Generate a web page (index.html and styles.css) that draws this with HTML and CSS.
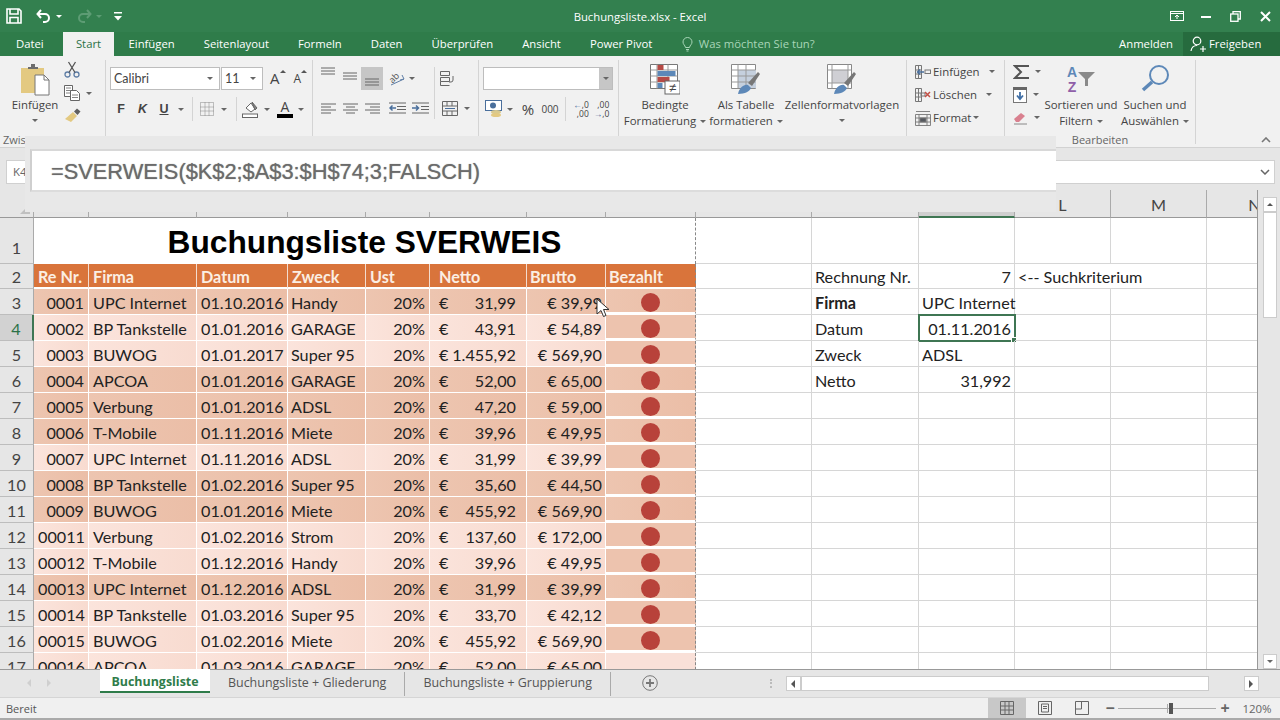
FILE: index.html
```html
<!DOCTYPE html>
<html lang="de">
<head>
    <meta charset="UTF-8">
    <title>Buchungsliste.xlsx - Excel</title>
    <link rel="stylesheet" href="styles.css">
</head>
<body>
<div class="app">
    <div class="titlebar">
        <div class="qat">
            <svg width="16" height="16" viewBox="0 0 16 16" fill="none" stroke="#fff" stroke-width="1.6"><path d="M1 1h12l2 2v12H1z"/><path d="M4 1v5h8V1M4 15V9.500h8V15"/></svg>
            <svg class="undo" width="16" height="14" viewBox="0 0 16 14" fill="none" stroke="#fff" stroke-width="2"><path d="M5 1L1.500 5 5 9M2 5h7a4 4 0 0 1 0 8H7"/></svg>
            <i class="caret white"></i>
            <svg class="redo" width="16" height="14" viewBox="0 0 16 14" fill="none" stroke="#5d9c74" stroke-width="2"><path d="M11 1l3.500 4L11 9M14 5H7a4 4 0 0 0 0 8h2"/></svg>
            <i class="caret dim"></i>
            <svg class="custom" width="8" height="9" viewBox="0 0 8 9" fill="#fff"><rect y="0" width="8" height="1.500"/><path d="M0 4h8L4 8.500z"/></svg>
        </div>
        <div class="doc-title">Buchungsliste.xlsx - Excel</div>
        <div class="win-btns">
            <svg width="14" height="10" viewBox="0 0 14 10" fill="none" stroke="#fff"><rect x=".5" y=".5" width="13" height="9"/><path d="M.5 2.500h13M7 8V4M5 6l2-2 2 2"/></svg>
            <svg width="10" height="10" viewBox="0 0 10 10" fill="#fff"><rect y="5" width="10" height="2"/></svg>
            <svg width="11" height="11" viewBox="0 0 11 11" fill="none" stroke="#fff" stroke-width="1.300"><rect x=".7" y="3" width="7.300" height="7.300"/><path d="M3 3V.7h7.300V8H8"/></svg>
            <svg width="11" height="11" viewBox="0 0 11 11" fill="none" stroke="#fff" stroke-width="2"><path d="M1 1l9 9M10 1l-9 9"/></svg>
        </div>
    </div>

    <div class="tabs">
        <span class="tab">Datei</span>
        <span class="tab active">Start</span>
        <span class="tab">Einfügen</span>
        <span class="tab">Seitenlayout</span>
        <span class="tab">Formeln</span>
        <span class="tab">Daten</span>
        <span class="tab">Überprüfen</span>
        <span class="tab">Ansicht</span>
        <span class="tab">Power Pivot</span>
        <span class="tell">
            <svg width="11" height="15" viewBox="0 0 11 15" fill="none" stroke="#a9d6b8"><path d="M3.500 10.500C3 8 1 7.500 1 5a4.500 4.500 0 0 1 9 0c0 2.500-2 3-2.500 5.500zM4 12.500h3M4.500 14h2"/></svg>
            Was möchten Sie tun?
        </span>
        <span class="login">Anmelden</span>
        <span class="share">
            <svg width="17" height="16" viewBox="0 0 17 16" fill="none" stroke="#fff" stroke-width="1.200"><circle cx="7" cy="5" r="3.800"/><path d="M1 15c.5-3.500 2.500-5.500 6-5.500M10 13h6M13 10v6"/></svg>
            Freigeben
        </span>
    </div>

    <div class="ribbon">
        <div class="group g-clip">
            <div class="group-body clip-body">
                <div class="big-btn paste">
                    <svg width="30" height="32" viewBox="0 0 30 32"><rect x="1" y="4" width="23" height="25" fill="#e3c981"/><path d="M8 5V3h3V0h4v3h3v2z" fill="#6d6d6d"/><path d="M15 11h9l5 5v15H15z" fill="#fff" stroke="#777"/><path d="M24 11v5h5" fill="none" stroke="#777"/></svg>
                    <span>Einfügen</span>
                    <i class="caret"></i>
                </div>
                <div class="clip-tools">
                    <svg width="16" height="17" viewBox="0 0 16 17" fill="none" stroke="#5f7ea6" stroke-width="1.300"><circle cx="3.500" cy="13.500" r="2.500"/><circle cx="12.500" cy="13.500" r="2.500"/><path stroke="#555" d="M5 11.500L11.500 1M11 11.500L4.500 1"/></svg>
                    <div class="tool-row">
                        <svg width="16" height="16" viewBox="0 0 16 16" fill="#fff" stroke="#666"><path d="M.5.500h8v11h-8z"/><path d="M2 3h5M2 5.500h5M2 8h5" stroke-width=".8"/><path d="M6.500 5.500h6l3 3v7h-9z"/><path d="M8 10h6M8 12.500h6" stroke-width=".8"/></svg>
                        <i class="caret"></i>
                    </div>
                    <svg width="17" height="15" viewBox="0 0 17 15"><path d="M1 11L9 4l4 4-6 6z" fill="#e3c981"/><path d="M10 3.500l3-3 3.500 3-3 3.500z" fill="#5f5f5f"/></svg>
                </div>
            </div>
            <div class="group-label label-clip">Zwischenablage</div>
        </div>

        <div class="group g-font">
            <div class="group-body">
                <div class="font-top">
                    <div class="select font-name"><span>Calibri</span><i class="caret"></i></div>
                    <div class="select font-size"><span>11</span><i class="caret"></i></div>
                    <span class="grow-a">A<i class="caret up"></i></span>
                    <span class="shrink-a">A<i class="caret up"></i></span>
                </div>
                <div class="font-tools">
                    <b class="fmt">F</b>
                    <b class="fmt italic">K</b>
                    <b class="fmt under">U</b>
                    <i class="caret"></i>
                    <span class="vsep"></span>
                    <svg width="14" height="14" viewBox="0 0 14 14" fill="none" stroke="#888" stroke-dasharray="1 1"><path d="M.5.500h13v13H.500zM5 .500v13M9 .500v13M.5 5h13M.5 9h13"/></svg>
                    <i class="caret"></i>
                    <span class="vsep"></span>
                    <svg width="18" height="18" viewBox="0 0 18 18" fill="none" stroke="#666"><path d="M4 8l5-5 4 6-4 3z" fill="#fff"/><path d="M10 2l5 6-2 2z" fill="#888"/><rect x=".5" y="14" width="15" height="3.500" fill="#fff"/></svg>
                    <i class="caret"></i>
                    <span class="color-a">A</span>
                    <i class="caret"></i>
                </div>
            </div>
        </div>

        <div class="group g-align">
            <div class="group-body align-body">
                <div class="align-left">
                    <div class="align-top">
                        <svg class="v-top" width="14" height="9" viewBox="0 0 14 9" stroke="#666"><path d="M0 1h14M0 4h14M0 7h14"/></svg>
                        <svg class="v-mid" width="14" height="9" viewBox="0 0 14 9" stroke="#666"><path d="M0 1h14M0 4h14M0 7h14"/></svg>
                        <span class="on"><svg width="14" height="9" viewBox="0 0 14 9" stroke="#666"><path d="M0 1h14M0 4h14M0 7h14"/></svg></span>
                        <span></span>
                        <svg width="18" height="17" viewBox="0 0 18 17" fill="none" stroke="#5f7ea6"><text x="6" y="11" font-size="9" fill="#555" stroke="none" text-anchor="middle" transform="rotate(-45 6 8)" font-family="Open Sans">ab</text><path d="M3 15l13-6M14 5l2 4-4 1"/></svg>
                        <i class="caret"></i>
                    </div>
                    <div class="align-bottom">
                        <svg width="15" height="11" viewBox="0 0 15 11" stroke="#666"><path d="M0 1h15M0 4h10M0 7h15M0 10h10"/></svg>
                        <svg width="15" height="11" viewBox="0 0 15 11" stroke="#666"><path d="M0 1h15M3 4h9M0 7h15M3 10h9"/></svg>
                        <svg width="15" height="11" viewBox="0 0 15 11" stroke="#666"><path d="M0 1h15M5 4h10M0 7h15M5 10h10"/></svg>
                        <svg width="17" height="12" viewBox="0 0 17 12" stroke="#666" fill="none"><path d="M0 1h17M8 4.500h9M8 7.500h9M0 11h17"/><path stroke="#4a6f9c" stroke-width="1.500" d="M7 6H1M3.500 3.500L1 6l2.500 2.500"/></svg>
                        <svg width="17" height="12" viewBox="0 0 17 12" stroke="#666" fill="none"><path d="M0 1h17M9 4.500h8M9 7.500h8M0 11h17"/><path stroke="#4a6f9c" stroke-width="1.500" d="M0 6h6M4 3.500L6.500 6 4 8.500"/></svg>
                    </div>
                </div>
                <span class="vsep tall"></span>
                <div class="align-right">
                    <svg width="16" height="15" viewBox="0 0 16 15" fill="none" stroke="#666"><path d="M.5.500h9v4h-9zM.5 6.500h9v4h-9zM.5 10.500v4h9M13 5v4a2 2 0 0 1-2 2H9"/></svg>
                    <div class="merge">
                        <svg width="16" height="15" viewBox="0 0 16 15" fill="none" stroke="#666"><path d="M.5.500h15v14H.5zM.5 5h15M.5 10h15M5 .500V5M10 .500V5M5 10v4.500M10 10v4.500"/><path stroke="#4a6f9c" d="M3 7.500h10"/></svg>
                        <i class="caret"></i>
                    </div>
                </div>
            </div>
        </div>

        <div class="group g-num">
            <div class="group-body">
                <div class="select num-format"><span></span><b class="num-btn"><i class="caret"></i></b></div>
                <div class="num-tools">
                    <svg width="18" height="18" viewBox="0 0 18 18"><rect x=".5" y=".5" width="16" height="10" fill="#fff" stroke="#4a6f9c"/><circle cx="8" cy="5.500" r="3" fill="#4a6f9c"/><ellipse cx="11" cy="12" rx="5" ry="2" fill="#d9c98e"/><ellipse cx="11" cy="15" rx="5" ry="2" fill="#e3c981"/></svg>
                    <i class="caret"></i>
                    <span class="pct">%</span>
                    <span class="thou">000</span>
                    <span class="vsep"></span>
                    <span class="dec"><span><em>←</em>,0</span><span>,00</span></span>
                    <span class="dec"><span>,00</span><span><em>→</em>,0</span></span>
                </div>
            </div>
        </div>

        <div class="group g-styles">
            <div class="group-body styles-body">
                <div class="big-btn b-cond">
                    <svg width="30" height="31" viewBox="0 0 30 31"><path d="M.5.500h27v24H.5z" fill="#fff" stroke="#777"/><path d="M7 .500v24M18 .500v24M.5 6h27M.5 12h27M.5 18h27" stroke="#999" fill="none"/><rect x="7.500" y="1" width="6" height="5" fill="#b64a45"/><rect x="7.500" y="7" width="18" height="5" fill="#5d88b8"/><rect x="7.500" y="13" width="12" height="5" fill="#b64a45"/><rect x="7.500" y="19" width="5" height="5" fill="#5d88b8"/><rect x="15" y="17" width="15" height="13" fill="#fff" stroke="#666"/><text x="22.500" y="28" font-size="13" text-anchor="middle" fill="#444" font-family="Liberation Sans">≠</text></svg>
                    <span>Bedingte</span>
                    <span>Formatierung<i class="caret inline"></i></span>
                </div>
                <div class="big-btn b-table">
                    <svg width="30" height="31" viewBox="0 0 30 31"><path d="M.5.500h24v24H.5z" fill="#fff" stroke="#888"/><rect x="7" y="6" width="18" height="18" fill="#c5d0de"/><path d="M7 .500v24M15 .500v24M.5 6h24M.5 12h24M.5 18h24" stroke="#999" fill="none"/><path d="M17 19L27 8l2 2-8 12z" fill="#777"/><path d="M7 30c1-6 6-10 10-9l3 3c-1 3-6 6-13 6z" fill="#5d88b8"/></svg>
                    <span>Als Tabelle</span>
                    <span>formatieren<i class="caret inline"></i></span>
                </div>
                <div class="big-btn b-cell">
                    <svg width="30" height="31" viewBox="0 0 30 31"><path d="M.5.500h24v24H.5z" fill="#fff" stroke="#888"/><rect x="5" y="6" width="16" height="13" fill="#cfcfd4"/><path d="M.5 6h24M5 .500v24M21 .500v24M.5 19h24" stroke="#999" fill="none"/><path d="M17 19L27 8l2 2-8 12z" fill="#777"/><path d="M7 30c1-6 6-10 10-9l3 3c-1 3-6 6-13 6z" fill="#5d88b8"/></svg>
                    <span>Zellenformatvorlagen</span>
                    <i class="caret"></i>
                </div>
            </div>
        </div>

        <div class="group g-cells">
            <div class="group-body cells-body">
                <div class="cell-row">
                    <svg width="16" height="16" viewBox="0 0 16 16" fill="none" stroke="#777"><path d="M.5 1.500h6v13h-6zM.5 6h6M.5 10h6M3.500 1.500v13"/><rect x="10" y="6" width="5.500" height="3.500"/><path stroke="#4a6f9c" stroke-width="1.400" d="M9 8H3M5 5.500L2.500 8 5 10.500"/></svg>
                    <span>Einfügen</span><i class="caret c1"></i>
                </div>
                <div class="cell-row">
                    <svg width="16" height="16" viewBox="0 0 16 16" fill="none" stroke="#777"><path d="M.5 1.500h6v13h-6zM.5 6h6M.5 10h6M3.500 1.500v13"/><path d="M6 6h4v3H6z"/><path stroke="#c24f45" stroke-width="1.500" d="M10 5l5 5M15 5l-5 5"/></svg>
                    <span>Löschen</span><i class="caret c2"></i>
                </div>
                <div class="cell-row">
                    <svg width="16" height="16" viewBox="0 0 16 16" fill="none" stroke="#777"><path d="M.5 4.500h15v11H.5zM.5 8h15M.5 12h15M4 4.500v11M12 4.500v11M1 1.500h14" stroke-width=".9"/><rect x="5" y="8" width="6" height="4" fill="#55595f"/></svg>
                    <span>Format</span><i class="caret c3"></i>
                </div>
            </div>
        </div>

        <div class="group g-edit">
            <div class="group-body edit-body">
                <div class="edit-small">
                    <div class="tool-row">
                        <svg width="16" height="14" viewBox="0 0 16 14" fill="none" stroke="#555" stroke-width="2"><path d="M15 2V1H2l6 6-6 6h13v-1"/></svg>
                        <i class="caret"></i>
                    </div>
                    <div class="tool-row">
                        <svg width="14" height="16" viewBox="0 0 14 16"><rect x=".5" y=".5" width="13" height="15" fill="#fff" stroke="#777"/><rect width="14" height="3" fill="#666"/><path d="M7 5v6M4 8.500L7 12l3-3.500" fill="none" stroke="#3f6ea5" stroke-width="1.800"/></svg>
                        <i class="caret"></i>
                    </div>
                    <div class="tool-row">
                        <svg width="15" height="14" viewBox="0 0 15 14"><path d="M1 8l7-6 4 3-6 6H3z" fill="#d9808f"/><path d="M1 13h13" stroke="#888"/></svg>
                        <i class="caret"></i>
                    </div>
                </div>
                <div class="big-btn b-sort">
                    <svg width="30" height="29" viewBox="0 0 30 29"><text x="6" y="13" font-size="14" font-weight="bold" text-anchor="middle" fill="#5d88b8" font-family="Liberation Sans">A</text><text x="6" y="28" font-size="14" font-weight="bold" text-anchor="middle" fill="#8f5fa8" font-family="Liberation Sans">Z</text><path d="M12 8h17l-7 7v7h-3v-7z" fill="#8a8a8a"/></svg>
                    <span>Sortieren und</span>
                    <span>Filtern<i class="caret inline"></i></span>
                </div>
                <div class="big-btn b-find">
                    <svg width="29" height="29" viewBox="0 0 29 29" fill="none"><circle cx="18" cy="11" r="9" stroke="#5d88b8" stroke-width="2"/><path d="M11 18L2 26" stroke="#5d88b8" stroke-width="3.500"/></svg>
                    <span>Suchen und</span>
                    <span>Auswählen<i class="caret inline"></i></span>
                </div>
            </div>
            <div class="group-label">Bearbeiten</div>
        </div>

        <svg class="collapse" width="10" height="6" viewBox="0 0 10 6" fill="none" stroke="#777" stroke-width="1.600"><path d="M1 5l4-4 4 4"/></svg>
    </div>

    <div class="formula-row">
        <div class="name-box">K4</div>
        <div class="formula-input">
            <svg width="10" height="6" viewBox="0 0 10 6" fill="none" stroke="#666" stroke-width="1.500"><path d="M1 1l4 4 4-4"/></svg>
        </div>
    </div>

    <div class="work">
        <div class="sheet">
            <table class="grid">
                <colgroup>
                    <col class="c-row"><col class="c-a"><col class="c-b"><col class="c-c"><col class="c-d"><col class="c-e"><col class="c-f"><col class="c-g"><col class="c-h"><col class="c-i"><col class="c-j"><col class="c-k"><col class="c-k"><col class="c-k"><col class="c-k">
                </colgroup>
                <tr class="letters">
                    <th class="corner"></th><th>A</th><th>B</th><th>C</th><th>D</th><th>E</th><th>F</th><th>G</th><th>H</th><th>I</th><th>J</th><th class="sel">K</th><th>L</th><th>M</th><th>N</th>
                </tr>
                <tr class="r1">
                    <th>1</th><td colspan="8" class="title">Buchungsliste SVERWEIS</td><td></td><td></td><td></td><td></td><td></td><td></td>
                </tr>
                <tr class="r2">
                    <th>2</th><td>Re Nr.</td><td>Firma</td><td>Datum</td><td>Zweck</td><td>Ust</td><td class="p10">Netto</td><td>Brutto</td><td>Bezahlt</td><td></td><td>Rechnung Nr.</td><td class="right">7</td><td colspan="2">&lt;-- Suchkriterium</td><td></td>
                </tr>
                <tr class="data dark">
                    <th>3</th><td>0001</td><td>UPC Internet</td><td>01.10.2016</td><td>Handy</td><td>20%</td><td><span class="eur">€</span>31,99</td><td>€ 39,99</td><td><span class="dot"></span></td><td></td><td class="bold">Firma</td><td>UPC Internet</td><td></td><td></td><td></td>
                </tr>
                <tr class="data">
                    <th class="sel">4</th><td>0002</td><td>BP Tankstelle</td><td>01.01.2016</td><td>GARAGE</td><td>20%</td><td><span class="eur">€</span>43,91</td><td>€ 54,89</td><td><span class="dot"></span></td><td></td><td>Datum</td><td class="right active-cell">01.11.2016<i class="handle"></i></td><td></td><td></td><td></td>
                </tr>
                <tr class="data">
                    <th>5</th><td>0003</td><td>BUWOG</td><td>01.01.2017</td><td>Super 95</td><td>20%</td><td><span class="eur">€</span>1.455,92</td><td>€ 569,90</td><td><span class="dot"></span></td><td></td><td>Zweck</td><td>ADSL</td><td></td><td></td><td></td>
                </tr>
                <tr class="data dark">
                    <th>6</th><td>0004</td><td>APCOA</td><td>01.01.2016</td><td>GARAGE</td><td>20%</td><td><span class="eur">€</span>52,00</td><td>€ 65,00</td><td><span class="dot"></span></td><td></td><td>Netto</td><td class="right">31,992</td><td></td><td></td><td></td>
                </tr>
                <tr class="data dark">
                    <th>7</th><td>0005</td><td>Verbung</td><td>01.01.2016</td><td>ADSL</td><td>20%</td><td><span class="eur">€</span>47,20</td><td>€ 59,00</td><td><span class="dot"></span></td><td></td><td></td><td></td><td></td><td></td><td></td>
                </tr>
                <tr class="data dark">
                    <th>8</th><td>0006</td><td>T-Mobile</td><td>01.11.2016</td><td>Miete</td><td>20%</td><td><span class="eur">€</span>39,96</td><td>€ 49,95</td><td><span class="dot"></span></td><td></td><td></td><td></td><td></td><td></td><td></td>
                </tr>
                <tr class="data">
                    <th>9</th><td>0007</td><td>UPC Internet</td><td>01.11.2016</td><td>ADSL</td><td>20%</td><td><span class="eur">€</span>31,99</td><td>€ 39,99</td><td><span class="dot"></span></td><td></td><td></td><td></td><td></td><td></td><td></td>
                </tr>
                <tr class="data dark">
                    <th>10</th><td>0008</td><td>BP Tankstelle</td><td>01.02.2016</td><td>Super 95</td><td>20%</td><td><span class="eur">€</span>35,60</td><td>€ 44,50</td><td><span class="dot"></span></td><td></td><td></td><td></td><td></td><td></td><td></td>
                </tr>
                <tr class="data dark">
                    <th>11</th><td>0009</td><td>BUWOG</td><td>01.01.2016</td><td>Miete</td><td>20%</td><td><span class="eur">€</span>455,92</td><td>€ 569,90</td><td><span class="dot"></span></td><td></td><td></td><td></td><td></td><td></td><td></td>
                </tr>
                <tr class="data">
                    <th>12</th><td>00011</td><td>Verbung</td><td>01.02.2016</td><td>Strom</td><td>20%</td><td><span class="eur">€</span>137,60</td><td>€ 172,00</td><td><span class="dot"></span></td><td></td><td></td><td></td><td></td><td></td><td></td>
                </tr>
                <tr class="data">
                    <th>13</th><td>00012</td><td>T-Mobile</td><td>01.12.2016</td><td>Handy</td><td>20%</td><td><span class="eur">€</span>39,96</td><td>€ 49,95</td><td><span class="dot"></span></td><td></td><td></td><td></td><td></td><td></td><td></td>
                </tr>
                <tr class="data dark">
                    <th>14</th><td>00013</td><td>UPC Internet</td><td>01.12.2016</td><td>ADSL</td><td>20%</td><td><span class="eur">€</span>31,99</td><td>€ 39,99</td><td><span class="dot"></span></td><td></td><td></td><td></td><td></td><td></td><td></td>
                </tr>
                <tr class="data">
                    <th>15</th><td>00014</td><td>BP Tankstelle</td><td>01.03.2016</td><td>Super 95</td><td>20%</td><td><span class="eur">€</span>33,70</td><td>€ 42,12</td><td><span class="dot"></span></td><td></td><td></td><td></td><td></td><td></td><td></td>
                </tr>
                <tr class="data">
                    <th>16</th><td>00015</td><td>BUWOG</td><td>01.02.2016</td><td>Miete</td><td>20%</td><td><span class="eur">€</span>455,92</td><td>€ 569,90</td><td><span class="dot"></span></td><td></td><td></td><td></td><td></td><td></td><td></td>
                </tr>
                <tr class="data last">
                    <th>17</th><td>00016</td><td>APCOA</td><td>01.03.2016</td><td>GARAGE</td><td>20%</td><td><span class="eur">€</span>52,00</td><td>€ 65,00</td><td></td><td></td><td></td><td></td><td></td><td></td><td></td>
                </tr>
            </table>
        </div>
        <div class="vscroll">
            <div class="sb-btn"><i class="caret up"></i></div>
            <div class="sb-thumb"></div>
            <div class="sb-track"></div>
            <div class="sb-btn"><i class="caret"></i></div>
        </div>
    </div>

    <div class="sheetbar">
        <div class="sheet-nav"><i class="tri left"></i><i class="tri right"></i></div>
        <div class="sheet-tab on">Buchungsliste</div>
        <div class="sheet-tab">Buchungsliste + Gliederung</div>
        <div class="sheet-tab">Buchungsliste + Gruppierung</div>
        <svg class="add-sheet" width="16" height="16" viewBox="0 0 16 16" fill="none" stroke="#777"><circle cx="8" cy="8" r="7.300"/><path stroke-width="1.800" d="M8 4v8M4 8h8"/></svg>
        <div class="hscroll">
            <span class="grip"></span>
            <div class="hs-btn"><i class="tri left dark"></i></div>
            <div class="hs-thumb"></div>
            <div class="hs-track"></div>
            <div class="hs-btn"><i class="tri right dark"></i></div>
        </div>
    </div>

    <div class="statusbar">
        <span class="ready">Bereit</span>
        <div class="views">
            <span class="view on"><svg width="14" height="14" viewBox="0 0 14 14" fill="none" stroke="#666"><path d="M.5.500h13v13H.5zM5 .500v13M9 .500v13M.5 5h13M.5 9h13"/></svg></span>
            <span class="view"><svg width="14" height="14" viewBox="0 0 14 14" fill="none" stroke="#666"><path d="M.5.500h13v13H.5z"/><path d="M3.500 3h7v8h-7zM5 5.500h4M5 7.500h4"/></svg></span>
            <span class="view last"><svg width="14" height="14" viewBox="0 0 14 14" fill="none" stroke="#666"><path d="M.5.500h13v13H.5zM.5 8h6M6.500.500V8"/></svg></span>
        </div>
        <span class="zoom-sign">−</span>
        <span class="slider"><i class="mid"></i><i class="knob"></i></span>
        <span class="zoom-sign plus">+</span>
        <span class="zoom-pct">120%</span>
    </div>

    <div class="formula-pop">
        <div class="formula-box">=SVERWEIS($K$2;$A$3:$H$74;3;FALSCH)</div>
    </div>

    <svg class="pointer" width="14" height="21" viewBox="0 0 14 21"><path d="M1 1v15l4-3.500 2.500 6 2.500-1-2.500-6H13z" fill="#fff" stroke="#333"/></svg>
</div>
</body>
</html>
```

FILE: styles.css
```css
* {
    box-sizing: border-box;
}
html, body {
    margin: 0;
    padding: 0;
}
body {
    font-family: "Open Sans", sans-serif;
    font-size: 11.400px;
    color: #444;
    background-color: #e6e6e6;
}
svg {
    display: block;
    flex: none;
}
.app {
    position: relative;
    width: 1280px;
    height: 720px;
    overflow: hidden;
}

/* small triangles used all over the ribbon */
.caret {
    display: inline-block;
    width: 0;
    height: 0;
    border-left: 3px solid transparent;
    border-right: 3px solid transparent;
    border-top: 3px solid #666;
}
.caret.up {
    border-top: 0;
    border-bottom: 3px solid #555;
}
.caret.white {
    border-top-color: #fff;
}
.caret.dim {
    border-top-color: #5d9c74;
}
.caret.inline {
    margin-left: 4px;
    vertical-align: 2px;
}

/* title bar */
.titlebar {
    display: grid;
    grid-template-columns: 1fr auto 1fr;
    align-items: center;
    height: 32px;
    background-color: #33804f;
    color: #fff;
}
.qat {
    display: flex;
    align-items: center;
    padding-left: 6px;
}
.undo {
    margin-left: 14px;
}
.qat .caret {
    margin-left: 4px;
}
.redo {
    margin-left: 14px;
}
.custom {
    margin-left: 12px;
}
.doc-title {
    font-size: 11.300px;
}
.win-btns {
    display: flex;
    justify-content: flex-end;
    align-items: center;
    gap: 19px;
    padding-right: 9px;
}
.win-btns svg:first-child {
    margin-right: -2px;
}

/* ribbon tabs */
.tabs {
    display: flex;
    align-items: stretch;
    height: 24px;
    background-color: #2f7c4a;
    color: #fff;
    font-size: 11.300px;
    line-height: 24px;
}
.tab {
    padding: 0 14.500px;
}
.tab:first-child {
    width: 63px;
    padding: 0 0 0 16px;
}
.tab.active {
    width: 51px;
    padding: 0;
    text-align: center;
    background-color: #f1f1f1;
    color: #2c7248;
}
.tell {
    display: flex;
    align-items: center;
    gap: 6px;
    margin-left: 15px;
    color: #a9d6b8;
}
.login {
    margin-left: auto;
}
.share {
    display: flex;
    align-items: center;
    gap: 2px;
    width: 97px;
    margin-left: 10px;
    padding-left: 7px;
    background-color: #266b3e;
}

/* ribbon */
.ribbon {
    display: flex;
    height: 92px;
    padding-top: 4px;
    background-color: #f1f1f1;
    border-bottom: 1px solid #d2d2d2;
}
.group {
    display: flex;
    flex-direction: column;
    height: 84px;
    border-right: 1px solid #d4d4d4;
}
.group-body {
    flex: none;
    height: 72px;
    padding-top: 7px;
}
.group-label {
    flex: none;
    height: 16px;
    line-height: 16px;
    text-align: center;
    color: #666;
    font-size: 11px;
    white-space: nowrap;
}
.label-clip {
    padding-left: 3px;
    overflow: hidden;
    text-align: left;
}
.g-clip { width: 106px; }
.g-font { width: 207px; padding-left: 4px; }
.g-align { width: 166px; padding-left: 4px; }
.g-num { width: 140px; padding-left: 4px; }
.g-styles { width: 288px; }
.g-cells { width: 98px; }
.g-edit { width: 191px; }

.big-btn {
    display: flex;
    flex-direction: column;
    align-items: center;
    line-height: 16px;
    white-space: nowrap;
}
.big-btn svg {
    margin-bottom: 2px;
}
.big-btn > .caret {
    margin-top: 6px;
}
.clip-body, .styles-body, .edit-body {
    display: flex;
    padding-top: 4px;
}
.paste {
    width: 70px;
}
.paste svg {
    margin-bottom: 1px;
}
.clip-tools {
    display: flex;
    flex-direction: column;
    gap: 7px;
    margin: -3px 0 0 -6px;
}
.tool-row {
    display: flex;
    align-items: center;
    gap: 6px;
}

.select {
    display: flex;
    align-items: center;
    justify-content: space-between;
    height: 23px;
    padding: 0 6px 0 3px;
    background-color: #fff;
    border: 1px solid #bdbdbd;
    font-family: "Lato", sans-serif;
    font-size: 12.500px;
}
.font-top {
    display: flex;
    align-items: center;
}
.font-name { width: 110px; }
.font-size { width: 42px; margin-left: 1px; }
.grow-a, .shrink-a {
    display: flex;
    align-items: flex-start;
    margin-left: 7px;
    font-size: 15px;
    line-height: 17px;
}
.shrink-a {
    font-size: 12px;
    margin-left: 8px;
}
.font-tools, .num-tools, .align-top, .align-bottom {
    display: grid;
    justify-items: center;
    align-items: center;
    height: 22px;
}
.font-tools {
    grid-template-columns: 22px 21px 22px 12px 10px 20px 14px 10px 20px 12px 24px 8px;
    margin-top: 7px;
}
.fmt {
    font-family: "Liberation Sans", sans-serif;
    font-size: 12.500px;
}
.fmt.italic {
    font-style: italic;
}
.fmt.under {
    text-decoration: underline;
}
.vsep {
    display: block;
    width: 1px;
    height: 24px;
    background-color: #d4d4d4;
}
.color-a {
    width: 16px;
    height: 18px;
    border-bottom: 4px solid #000;
    font-size: 14px;
    line-height: 14px;
    text-align: center;
}

.align-body {
    display: flex;
}
.align-left {
    width: 117px;
}
.align-top {
    grid-template-columns: 22px 22px 22px 4px 20px 10px;
    height: 23px;
}
.v-top {
    margin-top: -15px;
}
.v-mid {
    margin-top: -5px;
}
.align-top .on {
    display: flex;
    align-items: center;
    justify-content: center;
    width: 22px;
    height: 23px;
    padding-top: 8px;
    background-color: #c6c6c6;
}
.align-bottom {
    grid-template-columns: 22px 22px 22px 28px 18px;
    margin-top: 7px;
}
.vsep.tall {
    height: 52px;
}
.align-right {
    display: flex;
    flex-direction: column;
    gap: 15px;
    padding-left: 5px;
    padding-top: 4px;
}
.merge {
    display: flex;
    align-items: center;
    gap: 6px;
    padding-left: 2px;
}

.num-format {
    width: 130px;
    padding: 0;
}
.num-btn {
    display: flex;
    align-items: center;
    justify-content: center;
    width: 13px;
    height: 100%;
    background-color: #c6c6c6;
}
.num-tools {
    grid-template-columns: 22px 10px 26px 18px 12px 20px 21px;
    margin-top: 7px;
}
.pct {
    font-size: 15px;
}
.thou {
    font-size: 10px;
}
.dec {
    display: flex;
    flex-direction: column;
    align-items: flex-end;
    font-size: 8.500px;
    line-height: 9px;
}
.dec em {
    color: #4a6f9c;
    font-style: normal;
}

.b-cond { width: 92px; }
.b-table { width: 70px; }
.b-cell { width: 122px; }

.cells-body {
    padding-top: 0;
}
.cell-row {
    display: flex;
    align-items: center;
    height: 23px;
    padding-left: 8px;
}
.cell-row span {
    margin-left: 2px;
}
.c1 { margin-left: 9px; }
.c2 { margin-left: 9px; }
.c3 { margin-left: 2px; }

.edit-body {
    padding-top: 0;
}
.edit-small {
    display: flex;
    flex-direction: column;
    width: 40px;
}
.edit-small .tool-row {
    height: 23px;
    padding-left: 8px;
}
.b-sort {
    width: 72px;
    padding-top: 4px;
}
.b-find {
    width: 76px;
    padding-top: 4px;
}
.b-sort svg, .b-find svg {
    margin-bottom: 4px;
}
.collapse {
    margin: 77px 0 0 65px;
}

/* formula bar */
.formula-row {
    display: flex;
    height: 42px;
    padding: 12px 5px 6px 6px;
    background-color: #e6e6e6;
}
.name-box {
    width: 100px;
    padding-left: 6px;
    background-color: #fff;
    border: 1px solid #d0d0d0;
    line-height: 22px;
    color: #666;
}
.formula-input {
    display: flex;
    flex: 1;
    align-items: center;
    justify-content: flex-end;
    padding-right: 4px;
    background-color: #fff;
    border: 1px solid #d0d0d0;
}
.formula-pop {
    position: absolute;
    left: 25px;
    top: 136px;
    width: 1031px;
    height: 76px;
    padding: 13px 0 0 5px;
    background-color: #e8e8e8;
}
.formula-box {
    height: 43px;
    padding-left: 19px;
    background-color: #fff;
    border-left: 2px solid #cfcfcf;
    border-top: 2px solid #d8d8d8;
    border-bottom: 2px solid #dcdcdc;
    font-family: "Liberation Sans", sans-serif;
    font-size: 21.800px;
    line-height: 41px;
    color: #6b6b6b;
    text-shadow: 0 0 1px #8a8a8a;
}

/* sheet */
.work {
    display: flex;
    height: 479px;
}
.sheet {
    width: 1258px;
    height: 479px;
    overflow: hidden;
    background-color: #fff;
    border-right: 1px solid #999;
}
.grid {
    width: 1303px;
    table-layout: fixed;
    border-collapse: separate;
    border-spacing: 0;
    font-family: "Lato", sans-serif;
    font-size: 16.200px;
    color: #222;
}
.c-row { width: 34px; }
.c-a { width: 55px; }
.c-b { width: 108px; }
.c-c { width: 91px; }
.c-d { width: 78px; }
.c-e { width: 64px; }
.c-f { width: 97px; }
.c-g { width: 79px; }
.c-h { width: 90px; }
.c-i { width: 116px; }
.c-j { width: 107px; }
.c-k { width: 96px; }

.grid td {
    height: 26px;
    padding: 1px 4px 0;
    border-right: 1px solid #d6d6d6;
    border-bottom: 1px solid #d6d6d6;
    white-space: nowrap;
    position: relative;
}
.grid td:nth-child(n+10) {
    padding: 1px 3px 0;
}
.grid th {
    padding: 1px 0 0;
    background-color: #e6e6e6;
    border-right: 1px solid #aaa;
    border-bottom: 1px solid #bdbdbd;
    font-weight: normal;
    color: #444;
    text-align: center;
}
.grid .letters th {
    height: 28px;
    padding: 0;
    border-bottom: 1px solid #999;
    vertical-align: bottom;
    line-height: 24px;
}
.letters .corner {
    position: relative;
}
.letters .corner::after {
    content: "";
    position: absolute;
    right: 3px;
    bottom: 3px;
    border-left: 10px solid transparent;
    border-bottom: 10px solid #c0c0c0;
}
.grid th.sel {
    background-color: #d2d2d2;
    color: #2c7248;
    border-right: 2px solid #3f7653;
}
.grid .letters th.sel {
    background: linear-gradient(#e6e6e6 75%, #cfcfcf 75%);
    border-right: 1px solid #aaa;
    border-bottom: 2px solid #3f7653;
}
.r1 td {
    height: 46px;
}
.r1 th {
    padding: 0 0 2px;
    vertical-align: bottom;
    line-height: 26px;
}
.grid .r1 .title {
    padding: 2px 0 0;
    text-align: center;
    font-family: "Liberation Sans", sans-serif;
    font-size: 31.700px;
    font-weight: bold;
    color: #000;
    border-right: 1px dashed #888;
    border-bottom: 0;
}
.r2 td {
    height: 25px;
}
.r2 td:nth-child(-n+9) {
    background-color: #d9743b;
    color: #fbeee3;
    font-weight: bold;
    border-color: #f3dccf;
    border-bottom: 2px solid #fff;
}
.r2 td:nth-child(9) {
    border-right: 1px dashed #888;
}
.r2 td:nth-child(n+8):nth-child(-n+9) {
    padding-left: 3px;
}
.r2 .p10 {
    padding-left: 9px;
}
.right {
    text-align: right;
}
.bold {
    font-weight: bold;
}
.data td:nth-child(-n+9) {
    background-image: linear-gradient(90deg, #fbe4dc, #f8dbd0);
    border-color: #fff;
}
.data.dark td:nth-child(-n+9) {
    background-image: linear-gradient(90deg, #edc5b0, #ebbea7);
}
.data td:nth-child(2),
.data td:nth-child(4),
.data td:nth-child(6),
.data td:nth-child(7),
.data td:nth-child(8) {
    text-align: right;
}
.data td:nth-child(4) {
    padding-right: 5px;
}
.data td:nth-child(5) {
    padding-left: 3px;
}
.data td:nth-child(7) {
    padding: 1px 10px 0 9px;
}
.data td:nth-child(8) {
    padding-right: 3px;
}
.data td:nth-child(9) {
    background-image: none;
    background-color: #edc3ae;
    border-right: 1px dashed #888;
    border-bottom: 3px solid #fff;
    padding: 4px 0 0;
}
.data.last td:nth-child(9) {
    background-color: #f9e0d8;
}
.eur {
    float: left;
}
.dot {
    display: block;
    width: 19px;
    height: 19px;
    margin: 0 auto;
    border-radius: 50%;
    background-color: #b8423a;
}
.active-cell {
    outline: 2px solid #3f7653;
    outline-offset: -1px;
}
.handle {
    position: absolute;
    right: -3px;
    bottom: -3px;
    width: 6px;
    height: 6px;
    background-color: #3f7653;
    border: 1px solid #fff;
}

/* vertical scrollbar */
.vscroll {
    display: flex;
    flex-direction: column;
    align-items: center;
    width: 22px;
    padding: 7px 0 0 2px;
    background-color: #e6e6e6;
}
.sb-btn {
    display: flex;
    align-items: center;
    justify-content: center;
    width: 14px;
    height: 15px;
    background-color: #fff;
    border: 1px solid #ccc;
}
.sb-thumb {
    width: 14px;
    height: 106px;
    background-color: #fff;
    border: 1px solid #ccc;
}
.sb-track {
    flex: 1;
}

/* sheet tabs */
.sheetbar {
    display: flex;
    align-items: flex-start;
    height: 28px;
    background-color: #e6e6e6;
    border-top: 1px solid #999;
}
.tri {
    display: block;
    width: 0;
    height: 0;
    border-top: 4px solid transparent;
    border-bottom: 4px solid transparent;
}
.tri.left {
    border-right: 4px solid #cfcfcf;
}
.tri.right {
    border-left: 4px solid #cfcfcf;
}
.tri.dark.left {
    border-right-color: #555;
}
.tri.dark.right {
    border-left-color: #555;
}
.sheet-nav {
    display: flex;
    gap: 16px;
    width: 100px;
    padding: 9px 0 0 27px;
}
.sheet-tab {
    height: 24px;
    padding: 0 18px;
    border-right: 1px solid #aaa;
    margin-top: 2px;
    line-height: 22px;
    font-size: 12.450px;
    color: #555;
}
.sheet-tab.on {
    width: 110px;
    height: 24px;
    margin-top: -1px;
    padding: 0;
    background-color: #fff;
    border-right: 0;
    border-bottom: 2px solid #2f7c4a;
    line-height: 25px;
    text-align: center;
    font-weight: bold;
    color: #2f7c4a;
}
.add-sheet {
    margin: 5px 0 0 31px;
}
.hscroll {
    display: flex;
    align-items: center;
    margin-left: 112px;
    margin-top: 6px;
}
.grip {
    width: 2px;
    height: 9px;
    margin-right: 14px;
    border-left: 2px dotted #bbb;
}
.hs-btn {
    display: flex;
    align-items: center;
    justify-content: center;
    width: 15px;
    height: 15px;
    background-color: #fff;
    border: 1px solid #ccc;
}
.hs-thumb {
    width: 408px;
    height: 15px;
    background-color: #fff;
    border: 1px solid #ccc;
}
.hs-track {
    width: 35px;
}

/* status bar */
.statusbar {
    display: flex;
    align-items: center;
    height: 23px;
    background-color: #f0f0f0;
    border-top: 1px solid #d5d5d5;
    border-bottom: 2px solid #aaa;
    font-size: 11px;
}
.ready {
    padding-left: 6px;
    color: #555;
}
.views {
    display: flex;
    margin-left: auto;
    height: 100%;
}
.view {
    display: flex;
    align-items: center;
    justify-content: center;
    width: 38px;
}
.view.last {
    width: 36px;
}
.view.on {
    background-color: #c8c8c8;
}
.zoom-sign {
    width: 14px;
    margin-left: 3px;
    font-size: 16px;
    font-weight: bold;
    line-height: 16px;
    text-align: center;
    color: #666;
}
.zoom-sign.plus {
    margin: 0 2px 0 1px;
}
.slider {
    position: relative;
    width: 98px;
    height: 1px;
    margin: 0 1px;
    background-color: #aaa;
}
.slider .mid {
    position: absolute;
    left: 49px;
    top: -4px;
    width: 1px;
    height: 9px;
    background-color: #aaa;
}
.slider .knob {
    position: absolute;
    left: 51px;
    top: -5px;
    width: 4px;
    height: 11px;
    background-color: #555;
}
.zoom-pct {
    width: 46px;
    text-align: center;
    color: #666;
    font-size: 11.500px;
}

.pointer {
    position: absolute;
    left: 596px;
    top: 298px;
}
```
